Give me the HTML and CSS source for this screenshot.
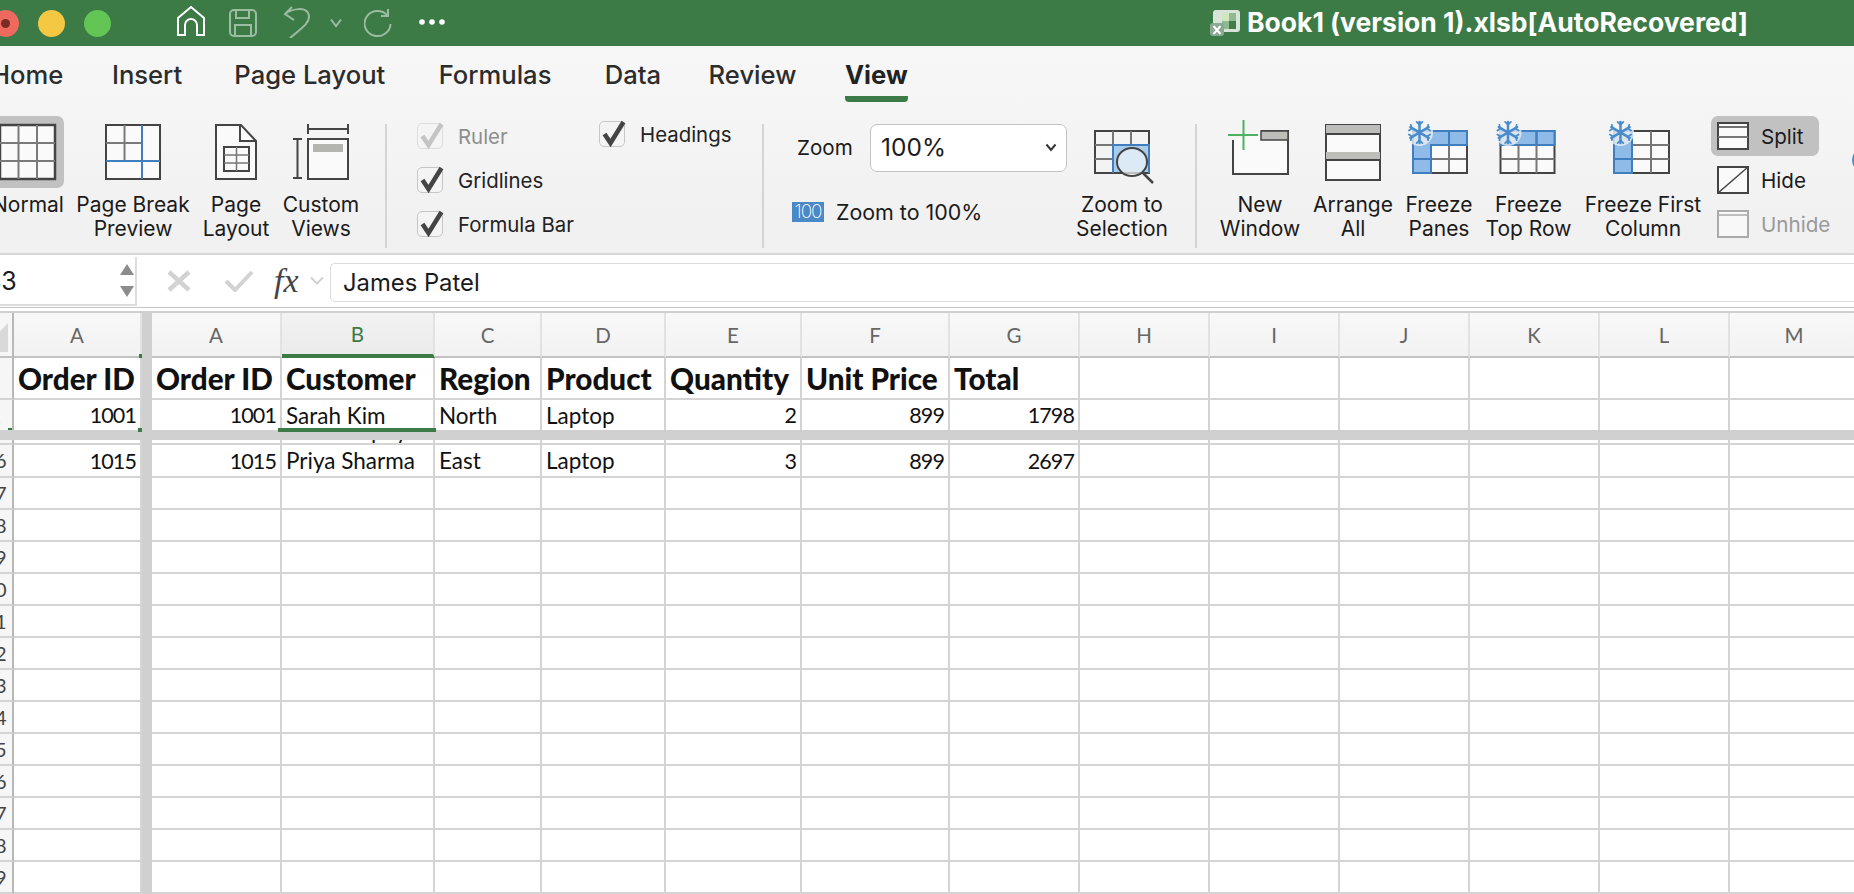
FILE: index.html
```html
<!DOCTYPE html>
<html lang="en">
<head>
<meta charset="utf-8">
<title>Book1 (version 1).xlsb[AutoRecovered]</title>
<link rel="stylesheet" href="styles.css">
</head>
<body>
<svg class="defs" width="0" height="0" aria-hidden="true">
  <symbol id="flake" viewBox="-14 -14 28 28" overflow="visible">
    <circle r="14" fill="#f3f3f3" opacity=".75"/>
    <g stroke="#4a8ccb" stroke-width="2.600" stroke-linecap="round" fill="none">
      <path d="M0-11V11M-9.500-5.500 9.500 5.500M-9.500 5.500 9.500-5.500"/>
      <path stroke-width="1.800" d="M-3-11 0-8 3-11M-3 11 0 8 3 11M-11-2-8-4-9-8M11 2 8 4 9 8M-11 2-8 4-9 8M11-2 8-4 9-8"/>
    </g>
  </symbol>
  <symbol id="tick" viewBox="0 0 26 30" overflow="visible">
    <path d="M5.500 13 11.500 22 24.500 1" fill="none" stroke="currentColor" stroke-width="4.500"/>
  </symbol>
</svg>

<header class="titlebar">
  <div class="lights">
    <span class="light red"><span class="dot"></span></span>
    <span class="light yellow"></span>
    <span class="light green"></span>
  </div>
  <div class="qat">
    <svg class="qi home" width="30" height="32" viewBox="0 0 30 32"><path d="M2 30V13L15 2l13 11v17h-7V20a6 6 0 0 0-12 0v10z" fill="none" stroke="#fff" stroke-width="2"/></svg>
    <svg class="qi save" width="30" height="30" viewBox="0 0 30 30"><g fill="none" stroke="#9dbda3" stroke-width="2"><rect x="2" y="2" width="26" height="26" rx="4"/><path d="M8 2v8h13V2M7 28V17h16v11"/></g></svg>
    <svg class="qi undo" width="28" height="32" viewBox="0 0 28 32"><path d="M9 1 2 8l9 6M2 8C8 3 26-1 26 11c0 6-6 10-19 21" fill="none" stroke="#9dbda3" stroke-width="2"/></svg>
    <svg class="qi caret" width="14" height="10" viewBox="0 0 14 10"><path d="M2 1.500 7 8l5-6.500" fill="none" stroke="#9dbda3" stroke-width="2"/></svg>
    <svg class="qi redo" width="28" height="29" viewBox="0 0 28 29"><path d="M23 6A13 12.500 0 1 0 26.500 15M24 0v7h-7" fill="none" stroke="#9dbda3" stroke-width="2"/></svg>
    <svg class="qi more" width="26" height="6" viewBox="0 0 26 6"><g fill="#fff"><circle cx="3" cy="3" r="2.800"/><circle cx="13" cy="3" r="2.800"/><circle cx="23" cy="3" r="2.800"/></g></svg>
  </div>
  <div class="doc">
    <svg width="30" height="28" viewBox="0 0 30 28">
      <rect x="3" y="1" width="27" height="22" rx="3" fill="#d8e4da"/>
      <rect x="12" y="4" width="14" height="16" fill="#8fb98f"/>
      <rect x="12" y="4" width="7" height="8" fill="#cfe6bf"/>
      <rect x="19" y="12" width="7" height="8" fill="#3f7d4a"/>
      <rect x="0" y="14" width="14" height="13" rx="3" fill="#8aa893"/>
      <path d="M3.500 17 10.500 25M10.500 17 3.500 25" stroke="#fff" stroke-width="2"/>
    </svg>
    <span class="doc-name">Book1 (version 1).xlsb[AutoRecovered]</span>
  </div>
</header>

<section class="ribbon">
  <nav class="tabs">
    <span class="tab">Home</span>
    <span class="tab">Insert</span>
    <span class="tab">Page Layout</span>
    <span class="tab">Formulas</span>
    <span class="tab">Data</span>
    <span class="tab">Review</span>
    <span class="tab current">View</span>
  </nav>
  <div class="tools">
    <div class="tool t-normal">
      <div class="ico on">
        <svg width="72" height="72" viewBox="-8 116 72 72"><rect x="0" y="125" width="55" height="54" fill="#fafafa" stroke="#444" stroke-width="2.500"/><path d="M18.500 125v54M37 125v54M0 143h55M0 161h55" stroke="#7a7a7a" stroke-width="2" fill="none"/></svg>
      </div>
      <div class="lab">Normal</div>
    </div>
    <div class="tool t-break">
      <div class="ico">
        <svg width="112" height="72" viewBox="77 116 112 72"><rect x="106" y="125" width="54" height="54" fill="#fafafa" stroke="#444" stroke-width="2"/><path d="M124.500 125v36M106 143h36" stroke="#7a7a7a" stroke-width="2" fill="none"/><path d="M142 125v54M106 161h54" stroke="#3f7fbf" stroke-width="2" fill="none"/></svg>
      </div>
      <div class="lab">Page Break<br>Preview</div>
    </div>
    <div class="tool t-layout">
      <div class="ico">
        <svg width="70" height="72" viewBox="201 116 70 72"><path d="M216 125h25l15 16v38h-40z" fill="#fafafa" stroke="#444" stroke-width="2"/><path d="M240 125v16h16" fill="none" stroke="#444" stroke-width="2"/><rect x="224" y="147" width="25" height="24" fill="#fafafa" stroke="#444" stroke-width="2"/><path d="M236.500 147v24M224 155h25M224 163h25" stroke="#777" stroke-width="1.500"/></svg>
      </div>
      <div class="lab">Page<br>Layout</div>
    </div>
    <div class="tool t-custom">
      <div class="ico">
        <svg width="78" height="72" viewBox="282 116 78 72"><path d="M308 124v10M348 124v10M308 129h40M293 139h9M293 178h9M297.500 139v39" stroke="#444" stroke-width="2" fill="none"/><rect x="308" y="139" width="40" height="40" fill="#fafafa" stroke="#444" stroke-width="2"/><rect x="313" y="144" width="30" height="8" fill="#b5b5b0"/></svg>
      </div>
      <div class="lab">Custom<br>Views</div>
    </div>
    <div class="sep s1"></div>
    <div class="checks c1">
      <label class="check off"><span class="box"><svg width="26" height="30"><use href="#tick"/></svg></span>Ruler</label>
      <label class="check"><span class="box"><svg width="26" height="30"><use href="#tick"/></svg></span>Gridlines</label>
      <label class="check"><span class="box"><svg width="26" height="30"><use href="#tick"/></svg></span>Formula Bar</label>
    </div>
    <div class="checks c2">
      <label class="check"><span class="box"><svg width="26" height="30"><use href="#tick"/></svg></span>Headings</label>
    </div>
    <div class="sep s2"></div>
    <div class="zoomgrp">
      <div class="zoomrow">
        <span class="zoomlab">Zoom</span>
        <div class="select"><span>100%</span><svg width="12" height="9" viewBox="0 0 12 9"><path d="M1.500 1.500 6 7l4.500-5.500" fill="none" stroke="#333" stroke-width="2"/></svg></div>
      </div>
      <div class="zoom100"><span class="badge">100</span><span>Zoom to 100%</span></div>
    </div>
    <div class="tool t-zsel">
      <div class="ico">
        <svg width="96" height="72" viewBox="1073 116 96 72"><rect x="1112" y="145" width="36" height="28" fill="#a9cbec"/><rect x="1094" y="131" width="54" height="42" fill="none" stroke="#444" stroke-width="2"/><path d="M1112 131v42M1130 131v14M1094 145h54M1094 159h18" stroke="#777" stroke-width="2"/><path d="M1112 173v-28h36v28" fill="none" stroke="#3f7fbf" stroke-width="2"/><ellipse cx="1131" cy="162" rx="15" ry="14" fill="#f2f6fa" fill-opacity=".7" stroke="#444" stroke-width="2"/><path d="M1141 172 1152 183" stroke="#444" stroke-width="2.500"/></svg>
      </div>
      <div class="lab">Zoom to<br>Selection</div>
    </div>
    <div class="sep s3"></div>
    <div class="tool t-new">
      <div class="ico">
        <svg width="84" height="72" viewBox="1217 118 84 72"><path d="M1232 142v34h55v-43h-27" fill="#fafafa" stroke="#444" stroke-width="2"/><rect x="1260" y="133" width="27" height="9" fill="#bdbdb9" stroke="#444" stroke-width="1.500"/><path d="M1242.500 122v30M1227 137h30" stroke="#4eb162" stroke-width="2"/></svg>
      </div>
      <div class="lab">New<br>Window</div>
    </div>
    <div class="tool t-arr">
      <div class="ico">
        <svg width="82" height="72" viewBox="1311 118 82 72"><rect x="1325" y="127" width="54" height="55" fill="#fafafa" stroke="#444" stroke-width="2"/><rect x="1325" y="127" width="54" height="9" fill="#bdbdb9"/><rect x="1325" y="154" width="54" height="8" fill="#bdbdb9"/><path d="M1325 136h54M1325 162h54" stroke="#444" stroke-width="2"/></svg>
      </div>
      <div class="lab">Arrange<br>All</div>
    </div>
    <div class="tool t-fp">
      <div class="ico">
        <svg width="76" height="72" viewBox="1400 118 76 72"><rect x="1412" y="133" width="54" height="42" fill="#fafafa"/><path d="M1412 133h54v14h-36v28h-18z" fill="#8fbbe8"/><path d="M1448 147v28M1430 161h36" stroke="#777" stroke-width="2"/><rect x="1412" y="133" width="54" height="42" fill="none" stroke="#444" stroke-width="2"/><path d="M1412 133h54v14h-36v28h-18z M1448 133v14M1412 161h18" fill="none" stroke="#3f7fbf" stroke-width="2"/><use href="#flake" x="1405" y="121" width="27" height="27"/></svg>
      </div>
      <div class="lab">Freeze<br>Panes</div>
    </div>
    <div class="tool t-ft">
      <div class="ico">
        <svg width="86" height="72" viewBox="1484.500 118 86 72"><rect x="1499" y="133" width="54" height="42" fill="#fafafa" stroke="#444" stroke-width="2"/><rect x="1499" y="133" width="54" height="14" fill="#8fbbe8" stroke="#3f7fbf" stroke-width="2"/><path d="M1517 147v28M1535 133v42M1499 161h54" stroke="#777" stroke-width="2"/><path d="M1535 133v14" stroke="#3f7fbf" stroke-width="2"/><use href="#flake" x="1493" y="121" width="27" height="27"/></svg>
      </div>
      <div class="lab">Freeze<br>Top Row</div>
    </div>
    <div class="tool t-fc">
      <div class="ico">
        <svg width="118" height="72" viewBox="1583 118 118 72"><rect x="1613" y="133" width="55" height="42" fill="#fafafa" stroke="#444" stroke-width="2"/><path d="M1631 133v42M1650 133v42M1613 147h55M1613 161h55" stroke="#777" stroke-width="2"/><rect x="1613" y="133" width="18" height="42" fill="#8fbbe8" stroke="#3f7fbf" stroke-width="2"/><path d="M1613 161h18" stroke="#3f7fbf" stroke-width="2"/><use href="#flake" x="1606" y="121" width="27" height="27"/></svg>
      </div>
      <div class="lab">Freeze First<br>Column</div>
    </div>
    <div class="win">
      <div class="winrow on">
        <svg width="32" height="28" viewBox="0 0 32 28"><rect x="1" y="1" width="30" height="26" fill="#fafafa" stroke="#444" stroke-width="2"/><path d="M1 5h30" stroke="#444" stroke-width="1.500"/><path d="M1 15h30" stroke="#777" stroke-width="2"/></svg>
        <span>Split</span>
      </div>
      <div class="winrow">
        <svg width="32" height="28" viewBox="0 0 32 28"><rect x="1" y="1" width="30" height="26" fill="#fafafa" stroke="#444" stroke-width="2"/><path d="M1 27 31 1" stroke="#444" stroke-width="1.500"/></svg>
        <span>Hide</span>
      </div>
      <div class="winrow dim">
        <svg width="32" height="28" viewBox="0 0 32 28"><rect x="1" y="1" width="30" height="26" fill="#f8f8f8" stroke="#aaa" stroke-width="2"/><path d="M1 5h30" stroke="#aaa" stroke-width="1.500"/></svg>
        <span>Unhide</span>
      </div>
    </div>
    <div class="edge"></div>
  </div>
</section>

<section class="fbar">
  <div class="namebox">
    <span class="ref">B3</span>
    <span class="spin"><i class="up"></i><i class="down"></i></span>
  </div>
  <div class="fbtns">
    <svg class="x" width="24" height="22" viewBox="0 0 24 22"><path d="M2 2 22 20M22 2 2 20" stroke="#d2d2d2" stroke-width="4.500"/></svg>
    <svg class="ok" width="30" height="22" viewBox="0 0 30 22"><path d="M2 11 11 20 28 2" fill="none" stroke="#d2d2d2" stroke-width="4"/></svg>
    <span class="fx">fx</span>
    <svg class="fxc" width="14" height="9" viewBox="0 0 14 9"><path d="M1 1.500 7 7.500l6-6" fill="none" stroke="#cfcfcf" stroke-width="1.800"/></svg>
  </div>
  <div class="finput">James Patel</div>
</section>

<main class="sheet">
  <div class="row colhead">
    <div class="rh corner"></div>
    <div class="ch sel-a">A</div><div class="gap"></div>
    <div class="ch">A</div><div class="ch active">B</div><div class="ch">C</div><div class="ch">D</div><div class="ch">E</div><div class="ch">F</div><div class="ch">G</div><div class="ch">H</div><div class="ch">I</div><div class="ch">J</div><div class="ch">K</div><div class="ch">L</div><div class="ch">M</div>
  </div>
  <div class="row r1">
    <div class="rh"><span>1</span></div>
    <i>Order ID</i><div class="gap"></div>
    <i>Order ID</i><i>Customer</i><i>Region</i><i>Product</i><i>Quantity</i><i>Unit Price</i><i>Total</i><i></i><i></i><i></i><i></i><i></i><i></i>
  </div>
  <div class="row r2">
    <div class="rh tick-r"><span>2</span></div>
    <i class="n tick-a">1001</i><div class="gap"></div>
    <i class="n">1001</i><i class="selcell">Sarah Kim</i><i>North</i><i>Laptop</i><i class="n">2</i><i class="n">899</i><i class="n">1798</i><i></i><i></i><i></i><i></i><i></i><i></i>
  </div>
  <div class="hsplit"></div>
  <div class="row peek">
    <div class="rh"></div>
    <i></i><div class="gap"></div>
    <i></i><i class="tail"><span>Lisa Murphy</span></i><i></i><i></i><i></i><i></i><i></i><i></i><i></i><i></i><i></i><i></i><i></i>
  </div>
  <div class="row r16">
    <div class="rh"><span>16</span></div>
    <i class="n">1015</i><div class="gap"></div>
    <i class="n">1015</i><i>Priya Sharma</i><i>East</i><i>Laptop</i><i class="n">3</i><i class="n">899</i><i class="n">2697</i><i></i><i></i><i></i><i></i><i></i><i></i>
  </div>
  <div class="row"><div class="rh"><span>17</span></div><i></i><div class="gap"></div><i></i><i></i><i></i><i></i><i></i><i></i><i></i><i></i><i></i><i></i><i></i><i></i><i></i></div>
  <div class="row"><div class="rh"><span>18</span></div><i></i><div class="gap"></div><i></i><i></i><i></i><i></i><i></i><i></i><i></i><i></i><i></i><i></i><i></i><i></i><i></i></div>
  <div class="row"><div class="rh"><span>19</span></div><i></i><div class="gap"></div><i></i><i></i><i></i><i></i><i></i><i></i><i></i><i></i><i></i><i></i><i></i><i></i><i></i></div>
  <div class="row"><div class="rh"><span>20</span></div><i></i><div class="gap"></div><i></i><i></i><i></i><i></i><i></i><i></i><i></i><i></i><i></i><i></i><i></i><i></i><i></i></div>
  <div class="row"><div class="rh"><span>21</span></div><i></i><div class="gap"></div><i></i><i></i><i></i><i></i><i></i><i></i><i></i><i></i><i></i><i></i><i></i><i></i><i></i></div>
  <div class="row"><div class="rh"><span>22</span></div><i></i><div class="gap"></div><i></i><i></i><i></i><i></i><i></i><i></i><i></i><i></i><i></i><i></i><i></i><i></i><i></i></div>
  <div class="row"><div class="rh"><span>23</span></div><i></i><div class="gap"></div><i></i><i></i><i></i><i></i><i></i><i></i><i></i><i></i><i></i><i></i><i></i><i></i><i></i></div>
  <div class="row"><div class="rh"><span>24</span></div><i></i><div class="gap"></div><i></i><i></i><i></i><i></i><i></i><i></i><i></i><i></i><i></i><i></i><i></i><i></i><i></i></div>
  <div class="row"><div class="rh"><span>25</span></div><i></i><div class="gap"></div><i></i><i></i><i></i><i></i><i></i><i></i><i></i><i></i><i></i><i></i><i></i><i></i><i></i></div>
  <div class="row"><div class="rh"><span>26</span></div><i></i><div class="gap"></div><i></i><i></i><i></i><i></i><i></i><i></i><i></i><i></i><i></i><i></i><i></i><i></i><i></i></div>
  <div class="row"><div class="rh"><span>27</span></div><i></i><div class="gap"></div><i></i><i></i><i></i><i></i><i></i><i></i><i></i><i></i><i></i><i></i><i></i><i></i><i></i></div>
  <div class="row"><div class="rh"><span>28</span></div><i></i><div class="gap"></div><i></i><i></i><i></i><i></i><i></i><i></i><i></i><i></i><i></i><i></i><i></i><i></i><i></i></div>
  <div class="row"><div class="rh"><span>29</span></div><i></i><div class="gap"></div><i></i><i></i><i></i><i></i><i></i><i></i><i></i><i></i><i></i><i></i><i></i><i></i><i></i></div>
</main>
</body>
</html>
```
FILE: styles.css
```css
html, body { margin: 0; padding: 0; width: 1854px; height: 894px; overflow: hidden; background: #fff; }
body { font-family: Inter, "Liberation Sans", sans-serif; color: #1b1b1b; }
.defs { position: absolute; }

/* Title bar */
.titlebar { height: 46px; background: #3c7a46; display: flex; align-items: center; }
.lights { display: flex; gap: 19px; margin-left: -8px; width: 176px; flex: none; box-sizing: border-box; }
.light { width: 27px; height: 27px; border-radius: 50%; display: flex; align-items: center; justify-content: center; flex: none; }
.red { background: #ee6a5f; }
.dot { width: 9px; height: 9px; border-radius: 50%; background: #7c2a26; }
.yellow { background: #f5c844; }
.green { background: #62c554; }
.qat { display: flex; align-items: center; margin-left: 8px; flex: none; }
.qi { flex: none; display: block; }
.home { margin-bottom: 4px; }
.save { margin-left: 22px; margin-bottom: 1px; }
.undo { margin-left: 25px; margin-bottom: 2px; }
.caret { margin-left: 18px; }
.redo { margin-left: 21px; }
.more { margin-left: 27px; margin-bottom: 2px; }
.doc { display: flex; align-items: center; margin-left: auto; margin-right: 106px; gap: 7px; }
.doc-name { color: #fff; font-weight: 700; font-size: 26.500px; white-space: nowrap; padding-bottom: 2px; }

/* Ribbon */
.ribbon { height: 209px; box-sizing: border-box; background: linear-gradient(#f7f7f7, #f0f0f0); border-bottom: 2px solid #d6d6d6; overflow: hidden; }
.tabs { display: flex; gap: 51px; height: 70px; margin-left: -9px; box-sizing: border-box; padding-top: 14px; }
.tab { font-size: 25.600px; font-weight: 500; line-height: 30px; height: 42px; color: #2c2c2c; white-space: nowrap; box-sizing: border-box; }
.tab:nth-child(2) { margin-left: -2.400px; }
.tab:nth-child(3) { margin-left: 1.200px; }
.tab:nth-child(4) { margin-left: 2.400px; }
.tab:nth-child(5) { margin-left: 2.300px; }
.tab:nth-child(6) { margin-left: -3.500px; }
.tab.current { margin-left: -2.400px; font-weight: 700; color: #222; border-bottom: 6px solid #3c7a46; border-radius: 0 0 4px 4px; }

.tools { display: flex; align-items: flex-start; }
.tool { display: flex; flex-direction: column; align-items: center; flex: none; }
.ico { height: 72px; border-radius: 7px; }
.ico.on { background: #c1c1c1; }
.ico svg { display: block; overflow: visible; }
.lab { margin-top: 5px; font-size: 21px; line-height: 24px; text-align: center; white-space: nowrap; }
.t-normal { width: 72px; margin-left: -8px; }
.t-break { width: 112px; margin-left: 13px; }
.t-layout { width: 70px; margin-left: 12px; }
.t-custom { width: 78px; margin-left: 11px; }
.sep { width: 2px; height: 124px; background: #d4d4d4; margin-top: 8px; flex: none; }
.s1 { margin-left: 25px; }
.s2 { margin-left: 0; }
.s3 { margin-left: 25px; }

.checks { display: flex; flex-direction: column; gap: 18px; flex: none; }
.c1 { width: 182px; margin-left: 30px; margin-top: 7px; }
.c2 { width: 163px; margin-top: 5px; }
.check { display: flex; align-items: center; gap: 15px; height: 26px; font-size: 20.400px; color: #222; white-space: nowrap; }
.check.off { color: #8d8d8d; }
.box { width: 26px; height: 26px; box-sizing: border-box; border: 1.500px solid #c6c6c6; border-radius: 5px; background: #f4f4f4; color: #444; position: relative; flex: none; }
.box svg { position: absolute; left: -1px; top: -1px; overflow: visible; }
.check.off .box { color: #c4c4c4; border-color: #dcdcdc; }

.zoomgrp { margin-left: 28px; margin-top: 8px; width: 275px; flex: none; }
.zoomrow { display: flex; align-items: center; height: 48px; }
.zoomlab { font-size: 20.600px; margin-left: 5px; margin-bottom: 2px; width: 73px; }
.select { width: 197px; height: 48px; box-sizing: border-box; background: #fff; border: 1.500px solid #c4c4c4; border-radius: 7px; display: flex; align-items: center; justify-content: space-between; padding: 0 9px 2px 10px; font-size: 24.500px; }
.zoom100 { display: flex; align-items: center; gap: 12px; margin-top: 30px; font-size: 21.400px; height: 20px; }
.badge { width: 32px; height: 20px; background: #4a88c7; color: #fff; font-size: 19px; font-weight: 200; line-height: 20px; text-align: center; letter-spacing: -1px; flex: none; }
.t-zsel { width: 96px; margin-left: 7px; }
.t-new { width: 84px; margin-left: 21px; }
.t-arr { width: 82px; margin-left: 10px; }
.t-fp { width: 76px; margin-left: 7px; }
.t-ft { width: 86px; margin-left: 8.500px; }
.t-fc { width: 118px; margin-left: 12.500px; }

.win { margin-left: 9px; width: 108px; flex: none; display: flex; flex-direction: column; gap: 4px; }
.winrow { display: flex; align-items: center; gap: 12px; height: 40px; padding-left: 6px; font-size: 20.600px; border-radius: 7px; white-space: nowrap; box-sizing: border-box; }
.winrow svg { flex: none; }
.winrow.on { background: #c1c1c1; }
.winrow.dim { color: #9a9a9a; }
.edge { width: 24px; height: 24px; border: 5px solid #4a8ccb; border-radius: 50%; margin: 32px 0 0 33px; flex: none; box-sizing: border-box; }

/* Formula bar */
.fbar { height: 53px; box-sizing: border-box; background: #fff; border-bottom: 1px solid #c4c4c4; display: flex; align-items: stretch; padding-top: 2px; }
.namebox { width: 137px; flex: none; box-sizing: border-box; border-right: 2px solid #dcdcdc; border-bottom: 2px solid #dcdcdc; display: flex; align-items: center; position: relative; overflow: hidden; height: 49px; background: #fff; }
.ref { font-size: 25px; margin-left: -15px; padding-top: 1px; }
.spin { margin-left: auto; margin-right: 1px; display: flex; flex-direction: column; gap: 11px; }
.spin i { display: block; width: 0; height: 0; border-left: 7px solid transparent; border-right: 7px solid transparent; }
.up { border-bottom: 11px solid #8c8c8c; }
.down { border-top: 11px solid #8c8c8c; }
.fbtns { display: flex; align-items: center; width: 191px; flex: none; padding-bottom: 3px; box-sizing: border-box; }
.x { margin-left: 30px; }
.ok { margin-left: 33px; }
.fx { font-family: "Liberation Serif", serif; font-style: italic; font-size: 34px; color: #444; margin-left: 20px; line-height: 30px; }
.fxc { margin-left: 11px; }
.finput { flex: 1; margin: 6px 0 5px 2px; border: 1.500px solid #dcdcdc; border-right: 0; border-radius: 5px 0 0 5px; font-size: 23.800px; padding-left: 12px; line-height: 37px; }

/* Sheet */
.sheet { border-top: 2px solid #cfcfcf; margin-top: 3px; font-family: Lato, "Liberation Sans", sans-serif; font-size: 22.500px; color: #111; }
.row { display: grid; grid-template-columns: 14px 128px 10px 130px 153px 107px 124px 136px 148px repeat(7, 130px); height: 32px; }
.row > i, .ch { font-style: normal; box-sizing: border-box; border-right: 2px solid #d4d4d4; border-bottom: 2px solid #d4d4d4; padding: 0 4px; white-space: nowrap; display: flex; align-items: center; position: relative; min-width: 0; }
.row > i.n { justify-content: flex-end; font-size: 21.500px; letter-spacing: -0.900px; padding-right: 4px; }
.gap { background: #d0d0d0; }
.rh { box-sizing: border-box; background: #f6f6f6; border-right: 2px solid #b8b8b8; border-bottom: 2px solid #d4d4d4; overflow: hidden; position: relative; color: #444; }
.rh span { display: block; width: 36px; margin-left: -23px; text-align: center; line-height: 30px; font-size: 20px; font-weight: 400; }

.colhead { height: 45px; }
.ch { background: linear-gradient(#f8f8f8, #f2f2f2); justify-content: center; color: #666; font-size: 20.500px; border-bottom-color: #c2c2c2; border-right-color: #e2e2e2; padding: 0; }
.ch.active { color: #3c7a46; background: linear-gradient(#f2f2f2, #ebebeb); border-bottom: 4px solid #3c7a46; }
.colhead .rh { border-bottom-color: #c2c2c2; }
.corner::before { content: ""; position: absolute; left: -20px; top: 10px; width: 28px; height: 29px; background: #d9d9d9; clip-path: polygon(100% 0, 100% 100%, 0 100%); }
.sel-a::after { content: ""; position: absolute; right: -2px; bottom: -2px; width: 3px; height: 4px; background: #3c7a46; }

.r1 { height: 42px; font-weight: 900; font-size: 29.700px; }
.r2 { height: 30px; }
.r2 > i, .r2 > .rh { border-bottom: 0; }
.selcell::after { content: ""; position: absolute; left: -4px; right: -3px; bottom: -2px; height: 4px; background: #3c7a46; z-index: 2; }
.tick-a::after { content: ""; position: absolute; right: -2px; bottom: -2px; width: 4px; height: 4px; background: #3c7a46; z-index: 2; }
.tick-r::after { content: ""; position: absolute; right: 0; bottom: 0; width: 4px; height: 2px; background: #3c7a46; }
.hsplit { height: 10px; background: #d0d0d0; position: relative; }
.peek { height: 5px; }
.peek > i { overflow: hidden; padding: 0; }
.tail span { position: absolute; left: 4px; bottom: -1px; line-height: 26px; }
.r16 { height: 33px; }
```
